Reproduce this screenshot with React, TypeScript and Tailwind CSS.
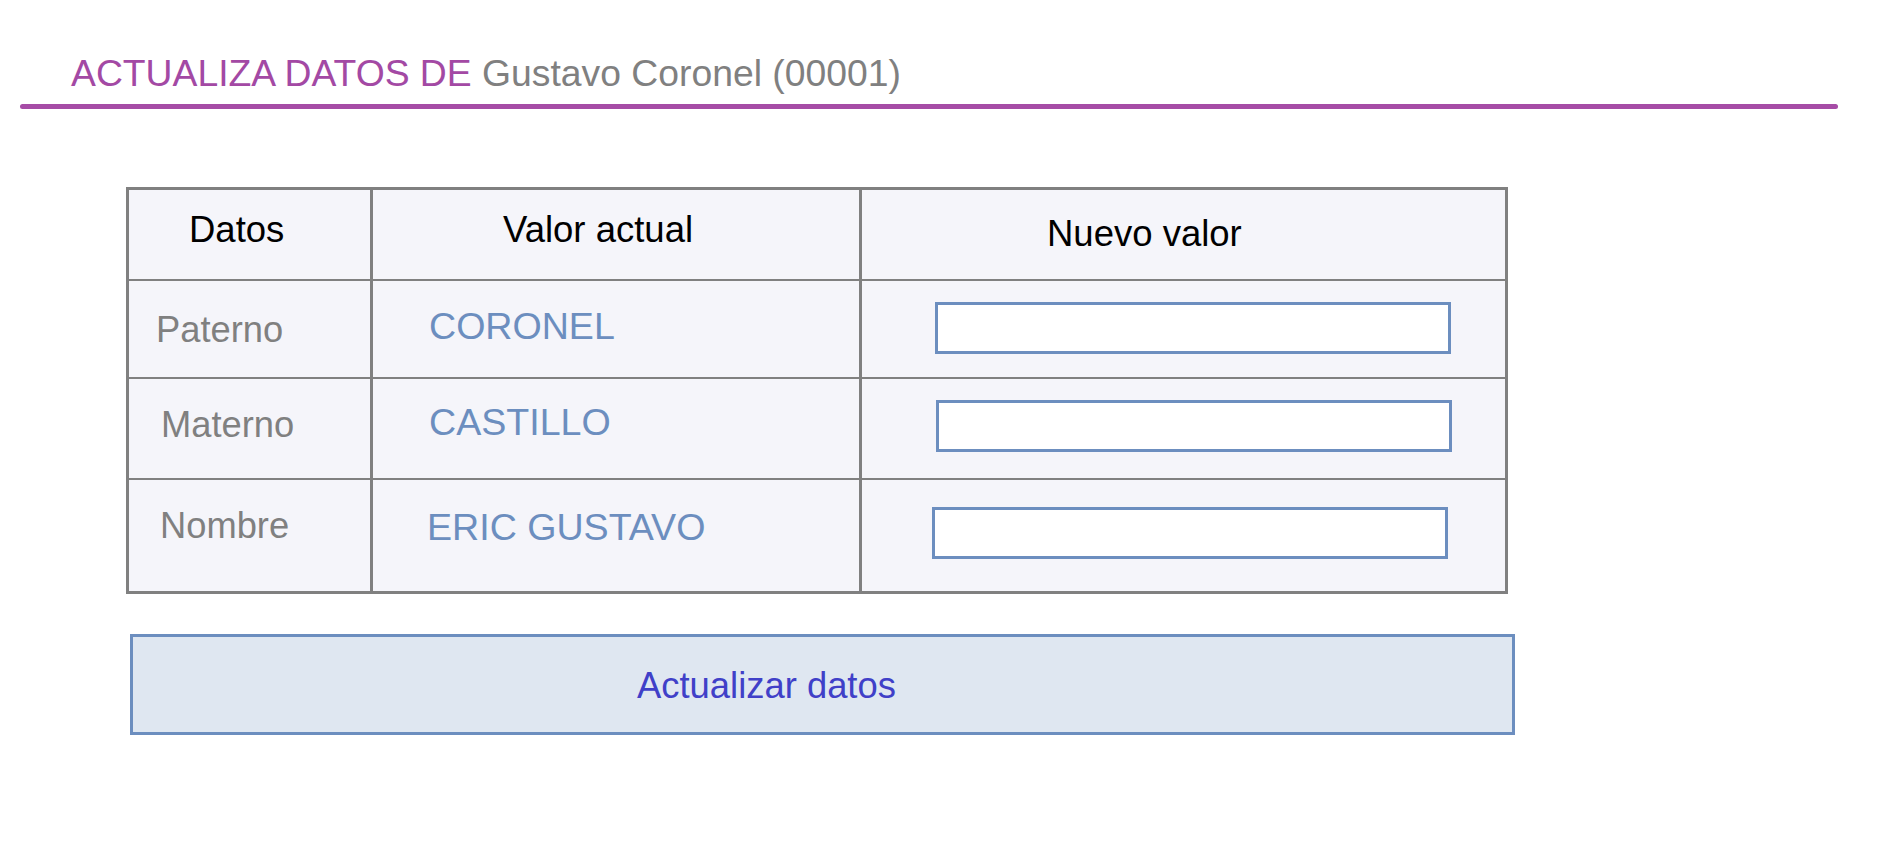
import React from 'react'

interface Row {
  label: string
  value: string
  labelPad: string
  valuePad: string
  inputPad: string
  height: string
  last?: boolean
}

const rows: Row[] = [
  { label: 'Paterno', value: 'CORONEL', labelPad: 'pl-[27px] pt-[31px]', valuePad: 'pl-[56px] pt-[27px]', inputPad: 'pl-[73px] pt-[21px]', height: 'h-[98px]' },
  { label: 'Materno', value: 'CASTILLO', labelPad: 'pl-[32px] pt-[28px]', valuePad: 'pl-[56px] pt-[25px]', inputPad: 'pl-[74px] pt-[21px]', height: 'h-[101px]' },
  { label: 'Nombre', value: 'ERIC GUSTAVO', labelPad: 'pl-[31px] pt-[28px]', valuePad: 'pl-[54px] pt-[29px]', inputPad: 'pl-[70px] pt-[27px]', height: 'h-[111px]', last: true },
]

export default function App() {
  return (
    <div className="min-h-screen w-full bg-white font-['Liberation_Sans',Arial,sans-serif]">
      {/* Header */}
      <div className="pt-[55px]">
        <h1 className="pl-[71px] text-[37.3px] leading-none font-normal">
          <span className="text-[#a349a4]">ACTUALIZA DATOS DE </span>
          <span className="text-[#808080]">Gustavo Coronel (00001)</span>
        </h1>
        <div className="ml-[20px] mt-[12px] h-[5px] w-[1818px] rounded-full bg-[#a64ca6]"></div>
      </div>

      {/* Tabla */}
      <div className="ml-[126px] mt-[78px] w-[1382px]">
        <div className="border-[3px] border-[#808080] bg-[#f5f5fa] leading-none">
          <div className="grid h-[91px] grid-cols-[244px_489px_1fr] border-b-2 border-[#808080] text-[36.5px] text-black">
            <div className="border-r-[3px] border-[#808080] pl-[60px] pt-[22px]">Datos</div>
            <div className="border-r-[3px] border-[#808080] pl-[130px] pt-[22px]">Valor actual</div>
            <div className="pl-[185px] pt-[26px]">Nuevo valor</div>
          </div>
          {rows.map((row) => (
            <div
              key={row.label}
              className={`grid grid-cols-[244px_489px_1fr] ${row.height} ${row.last ? '' : 'border-b-2 border-[#808080]'}`}
            >
              <div className={`border-r-[3px] border-[#808080] text-[36.3px] text-[#808080] ${row.labelPad}`}>{row.label}</div>
              <div className={`border-r-[3px] border-[#808080] text-[37.6px] text-[#6c8ebf] ${row.valuePad}`}>{row.value}</div>
              <div className={row.inputPad}>
                <input
                  type="text"
                  className="block h-[52px] w-[516px] border-[3px] border-[#6c8ebf] bg-white outline-none"
                />
              </div>
            </div>
          ))}
        </div>

        {/* Boton */}
        <div
          role="button"
          className="ml-[4px] mt-[40px] h-[101px] w-[1385px] cursor-pointer border-[3px] border-[#6c8ebf] bg-[#dfe7f1] pl-[504px] pt-[31px] text-[36.4px] leading-none text-[#4040c8]"
        >
          Actualizar datos
        </div>
      </div>
    </div>
  )
}
